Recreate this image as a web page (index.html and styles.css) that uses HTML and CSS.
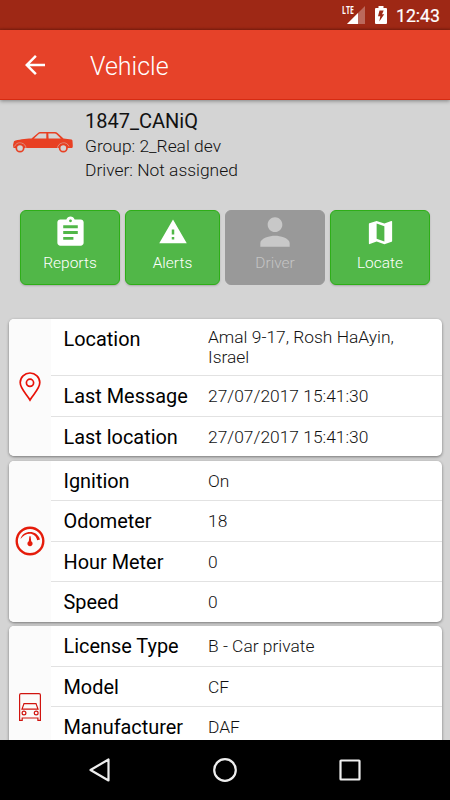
FILE: index.html
```html
<!DOCTYPE html>
<html lang="en">
<head>
    <meta charset="UTF-8">
    <meta name="viewport" content="width=device-width, initial-scale=1.0">
    <title>Vehicle</title>
    <link rel="stylesheet" href="styles.css">
</head>
<body>
    <div class="screen">
        <div class="status-bar">
            <div class="signal">
                <span class="lte">LTE</span>
                <svg width="18" height="18" viewBox="0 0 18 18">
                    <path d="M18 0V18H0z" fill="#fff" fill-opacity="0.3"/>
                    <path d="M11 7V18H0z" fill="#fff"/>
                </svg>
            </div>
            <svg class="battery" width="12" height="18" viewBox="0 0 12 18">
                <path d="M3.500 0h5v2H11q1 0 1 1v14q0 1-1 1H1q-1 0-1-1V3q0-1 1-1h2.500z" fill="#fff"/>
                <path d="M4.500 4.500h4.200L7 8.300h2.200L4.300 15.600l1-5.400H3z" fill="#9e2815"/>
            </svg>
            <span class="clock">12:43</span>
        </div>

        <header class="app-bar">
            <svg class="back" width="20" height="20" viewBox="4 4 16 16">
                <path d="M20 11H7.830l5.590-5.590L12 4l-8 8 8 8 1.410-1.410L7.830 13H20v-2z" fill="#fff"/>
            </svg>
            <h1>Vehicle</h1>
        </header>

        <main>
            <section class="vehicle">
                <svg class="car" width="60" height="22" viewBox="0 0 60 22">
                    <path d="M1 9.300C5 7.600 12 6.800 18.500 6.600L25 .9Q25.800.1 27 .1h15q1.500 0 2.500 1l6 5.500 8 1q1 .3 1 1.500l.3 4.500q.2 2-.8 2.500H.5L0 13z" fill="#e84023"/>
                    <path d="M21 6.500l4.800-4.400q.5-.5 1.200-.5h6.300v4.900zM35.300 1.600h6.500q1 0 1.700.7l4.300 4.200H35.600z" fill="#d4d4d4"/>
                    <path d="M1.500 14.500A6 6 0 0 1 13 16.500M44.500 16.500A6 6 0 0 1 56 14.500" fill="none" stroke="#d4d4d4" stroke-width=".5"/>
                    <circle cx="7" cy="16" r="3.700" fill="#d4d4d4" stroke="#e84023" stroke-width="1.700"/>
                    <circle cx="50.300" cy="16" r="3.700" fill="#d4d4d4" stroke="#e84023" stroke-width="1.700"/>
                </svg>
                <div class="vehicle-info">
                    <h2>1847_CANiQ</h2>
                    <p>Group: 2_Real dev</p>
                    <p>Driver: Not assigned</p>
                </div>
            </section>

            <nav class="actions">
                <button>
                    <svg width="35" height="35" viewBox="0 0 24 24">
                        <path d="M19 3h-4.180C14.400 1.840 13.300 1 12 1c-1.300 0-2.400.84-2.820 2H5c-1.100 0-2 .9-2 2v14c0 1.100.9 2 2 2h14c1.100 0 2-.9 2-2V5c0-1.100-.9-2-2-2zm-7 0c.55 0 1 .45 1 1s-.45 1-1 1-1-.45-1-1 .45-1 1-1zm2 14H7v-2h7v2zm3-4H7v-2h10v2zm0-4H7V7h10v2z"/>
                    </svg>
                    <span>Reports</span>
                </button>
                <button>
                    <svg width="30" height="30" viewBox="0 0 24 24">
                        <path d="M1 21h22L12 2 1 21zm12-3h-2v-2h2v2zm0-4h-2v-4h2v4z"/>
                    </svg>
                    <span>Alerts</span>
                </button>
                <button disabled>
                    <svg width="44" height="44" viewBox="0 0 24 24">
                        <path d="M12 12c2.210 0 4-1.790 4-4s-1.790-4-4-4-4 1.790-4 4 1.790 4 4 4zm0 2c-2.670 0-8 1.340-8 4v2h16v-2c0-2.660-5.330-4-8-4z"/>
                    </svg>
                    <span>Driver</span>
                </button>
                <button>
                    <svg width="31" height="31" viewBox="0 0 24 24">
                        <path d="M20.500 3l-.16.030L15 5.100 9 3 3.360 4.900c-.21.070-.36.250-.36.480V20.500c0 .28.220.5.500.5l.16-.030L9 18.900l6 2.100 5.640-1.900c.21-.070.360-.25.360-.48V3.500c0-.28-.22-.5-.5-.5zM15 19l-6-2.110V5l6 2.110V19z"/>
                    </svg>
                    <span>Locate</span>
                </button>
            </nav>

            <section class="card">
                <div class="card-icon">
                    <svg width="22" height="30" viewBox="0 0 22 30">
                        <path d="M11 28C8 22.500 1.200 17 1.200 10.600a9.800 9.600 0 0 1 19.600 0C20.800 17 14 22.500 11 28z"/>
                        <circle cx="11" cy="10.800" r="3.600"/>
                    </svg>
                </div>
                <dl>
                    <div class="row tall"><dt>Location</dt><dd>Amal 9-17, Rosh HaAyin, Israel</dd></div>
                    <div class="row"><dt>Last Message</dt><dd>27/07/2017 15:41:30</dd></div>
                    <div class="row"><dt>Last location</dt><dd>27/07/2017 15:41:30</dd></div>
                </dl>
            </section>

            <section class="card">
                <div class="card-icon gauge">
                    <svg width="30" height="30" viewBox="0 0 30 30">
                        <circle cx="15" cy="15" r="13.300" stroke-width="2.400"/>
                        <path d="M5.500 13C7.500 4 22 3 25 13.500L22.200 14.200C20.500 6 11 5.500 5.500 13z" fill="#e51c0b" stroke="none"/>
                        <path d="M14.400 10.300h1.200l.6 5a2.600 2.600 0 1 1-2.400 0z" fill="#e51c0b" stroke="none"/>
                    </svg>
                </div>
                <dl>
                    <div class="row"><dt>Ignition</dt><dd>On</dd></div>
                    <div class="row"><dt>Odometer</dt><dd>18</dd></div>
                    <div class="row"><dt>Hour Meter</dt><dd>0</dd></div>
                    <div class="row"><dt>Speed</dt><dd>0</dd></div>
                </dl>
            </section>

            <section class="card">
                <div class="card-icon garage">
                    <svg width="22" height="28" viewBox="0 0 22 28">
                        <path d="M.6 27.400V2Q.6.600 2 .600h18q1.400 0 1.400 1.400v25.400h-2.500v-2.400H3.200v2.400z"/>
                        <path d="M5 10.600h12l2 5.500H3z"/>
                        <circle cx="5" cy="20" r="1.900"/>
                        <circle cx="17.200" cy="20" r="1.900"/>
                    </svg>
                </div>
                <dl>
                    <div class="row"><dt>License Type</dt><dd>B - Car private</dd></div>
                    <div class="row"><dt>Model</dt><dd>CF</dd></div>
                    <div class="row"><dt>Manufacturer</dt><dd>DAF</dd></div>
                    <div class="row"></div>
                </dl>
            </section>
        </main>

        <footer class="nav-bar">
            <svg width="24" height="26" viewBox="0 0 24 26"><path d="M20.500 2.500v21L2.500 13z"/></svg>
            <svg width="26" height="26" viewBox="0 0 26 26"><circle cx="13" cy="13" r="10.800"/></svg>
            <svg width="24" height="24" viewBox="0 0 24 24"><rect x="2.500" y="2.500" width="19" height="19" rx=".5"/></svg>
        </footer>
    </div>
</body>
</html>
```
FILE: styles.css
```css
* {
    margin: 0;
    padding: 0;
    box-sizing: border-box;
}

body {
    font-family: Roboto, sans-serif;
    color: #111;
    background-color: #d4d4d4;
}

.screen {
    display: flex;
    flex-direction: column;
    height: 800px;
    width: 450px;
    overflow: hidden;
}

svg {
    display: block;
    flex: none;
}

.status-bar {
    height: 30px;
    flex: none;
    display: flex;
    justify-content: flex-end;
    align-items: center;
    padding-right: 10px;
    background: linear-gradient(#9e2815 27px, #8a200f 30px);
    color: #fff;
}

.signal {
    position: relative;
    margin-right: 10px;
}

.lte {
    position: absolute;
    left: -5px;
    top: -1px;
    font: bold 10.5px/10px "Open Sans", sans-serif;
    transform: scaleX(0.66);
    transform-origin: left;
}

.battery {
    margin-right: 9px;
}

.clock {
    font-size: 17.7px;
    font-weight: 400;
    line-height: 30px;
    padding-top: 1px;
    -webkit-text-stroke: 0.2px #fff;
}

.app-bar {
    height: 70px;
    flex: none;
    display: flex;
    align-items: center;
    padding-left: 25px;
    background-color: #e64229;
    border-bottom: 1px solid #d62b12;
    box-shadow: 0 1px 4px rgba(0, 0, 0, 0.4);
    color: #fff;
    z-index: 1;
}

.app-bar h1 {
    margin-left: 45px;
    padding-top: 3px;
    font-size: 25px;
    font-weight: 300;
}

main {
    flex: 1;
    min-height: 0;
    overflow: hidden;
}

.vehicle {
    display: flex;
    height: 110px;
    padding: 8px 0 0 12.5px;
}

.car {
    margin-top: 24px;
}

.vehicle-info {
    margin-left: 12.5px;
}

.vehicle-info h2 {
    font-size: 20px;
    font-weight: 400;
    line-height: 26px;
}

.vehicle-info p {
    font-size: 17.4px;
    font-weight: 300;
    line-height: 24px;
}

.actions {
    display: grid;
    grid-template-columns: 100px 95px 100px 100px;
    gap: 5px;
    margin: 0 20px 33.5px;
}

.actions button {
    display: grid;
    grid-template-rows: 42px 20px;
    place-items: center;
    align-content: start;
    height: 75px;
    border: 1px solid #2eae18;
    border-radius: 6px;
    background-color: #51b748;
    box-shadow: 0 1px 2px rgba(0, 0, 0, 0.2);
    color: #fff;
    fill: #fff;
    font: 300 15.5px Roboto, sans-serif;
}

.actions button:disabled {
    border-color: #999;
    background-color: #999;
    box-shadow: none;
    color: #c4c4c4;
    fill: #c8c8c8;
}

.actions span {
    line-height: 20px;
}

.card {
    display: flex;
    margin: 0 8.5px 4.5px;
    border-radius: 5px;
    background-color: #fff;
    box-shadow: 0 1px 3px rgba(0, 0, 0, 0.45);
    overflow: hidden;
}

.card-icon {
    width: 42.5px;
    flex: none;
    display: flex;
    align-items: center;
    justify-content: center;
    background-color: #fbfbfb;
    fill: none;
    stroke: #e81208;
    stroke-width: 1.7;
}

.gauge {
    stroke: #e51c0b;
}

.garage {
    stroke: #d0140f;
    stroke-width: 1.2;
}

dl {
    flex: 1;
}

.row {
    display: flex;
    height: 40.5px;
    line-height: 41.5px;
    border-bottom: 1px solid #e2e2e2;
}

.row:last-child {
    height: 39.5px;
    border-bottom: none;
}

dt {
    width: 157px;
    padding-left: 12.5px;
    font-size: 19.9px;
    color: #000;
}

dd {
    flex: 1;
    font-size: 17.4px;
    font-weight: 300;
}

.row.tall {
    height: 57.5px;
}

.tall dd {
    padding: 8px 40px 0 0;
    line-height: 20.5px;
}

.nav-bar {
    height: 60px;
    flex: none;
    display: flex;
    align-items: center;
    justify-content: space-between;
    padding: 0 88px;
    background-color: #000;
    fill: none;
    stroke: #eee;
    stroke-width: 2.2;
    stroke-linejoin: round;
}
```
